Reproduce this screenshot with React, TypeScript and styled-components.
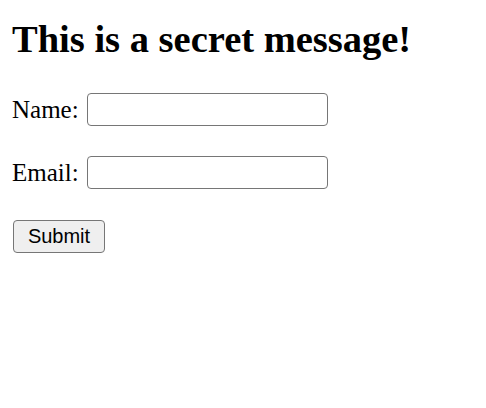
import React from "react";
import styled, { createGlobalStyle } from "styled-components";

const Global = createGlobalStyle`
  html, body { margin: 0; padding: 0; background: #fff; }
  body { font-family: "Liberation Serif", "Times New Roman", serif; color: #000; }
`;

const Page = styled.div`
  padding: 12px 12px;
  display: flex;
  flex-direction: column;
  align-items: flex-start;
`;

const Title = styled.h1`
  margin: 4px 0 0;
  font-size: 38.5px;
  line-height: 46px;
  font-weight: bold;
`;

const Form = styled.form`
  display: flex;
  flex-direction: column;
  align-items: flex-start;
  gap: 30px;
  margin-top: 31px;
`;

const Row = styled.label`
  display: flex;
  align-items: center;
  gap: 8px;
  font-size: 25px;
  line-height: 33px;
`;

const Input = styled.input`
  box-sizing: border-box;
  width: 241px;
  height: 33px;
  border: 1px solid #767676;
  border-radius: 4px;
  background: #fff;
  padding: 0 6px;
  font: 20px "Liberation Sans", Arial, sans-serif;
  outline: none;
`;

const Button = styled.button`
  box-sizing: border-box;
  width: 92px;
  height: 33px;
  margin: 1px 0 0 1px;
  border: 1px solid #767676;
  border-radius: 4px;
  background: #efefef;
  font: 20px "Liberation Sans", Arial, sans-serif;
  color: #000;
  padding: 0;
`;

export default function App() {
  return (
    <>
      <Global />
      <Page>
        <Title>This is a secret message!</Title>
        <Form onSubmit={(e) => e.preventDefault()}>
          <Row>
            Name:<Input type="text" />
          </Row>
          <Row>
            Email:<Input type="email" />
          </Row>
          <Button type="submit">Submit</Button>
        </Form>
      </Page>
    </>
  );
}
